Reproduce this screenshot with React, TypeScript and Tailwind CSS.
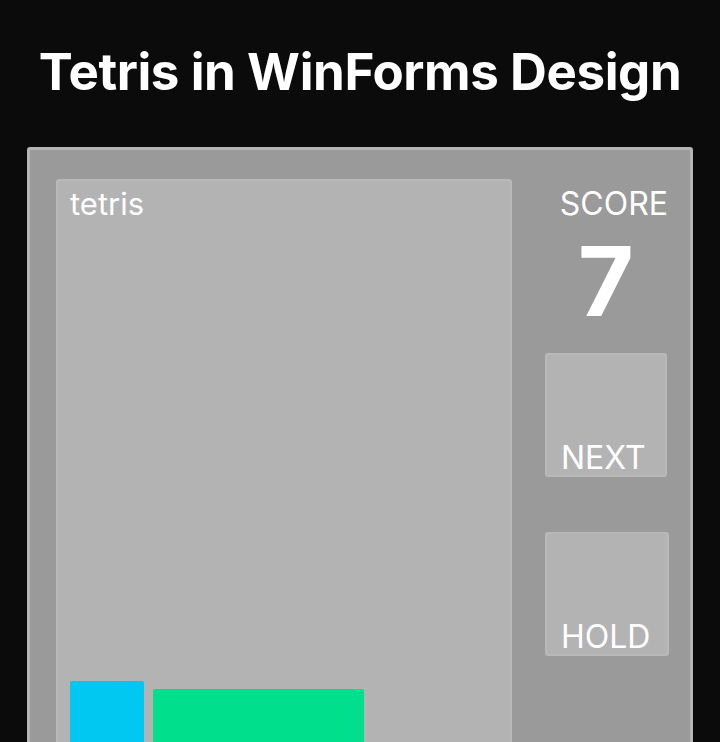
const font = { fontFamily: "Inter, 'Noto Sans', sans-serif" };

const PreviewBox = ({ label, className }: { label: string; className: string }) => (
  <div
    className={`flex h-[124px] items-end rounded-[3px] border-2 border-[#b9b9b9] bg-[#b3b3b3] pl-[14px] ${className}`}
  >
    <span className="text-[32px] leading-none text-white pb-[1px]">{label}</span>
  </div>
);

export default function App() {
  return (
    <div className="h-[742px] overflow-hidden bg-[#0b0b0b] text-white" style={font}>
      <h1 className="pt-[42px] text-center text-[51px] font-bold leading-[60px] tracking-[-0.4px]">
        Tetris in WinForms Design
      </h1>

      <div className="mx-[27px] mt-[45px] flex h-[640px] rounded-t-[3px] border-[3px] border-[#b5b5b5] bg-[#9a9a9a] pl-[26px] pt-[29px]">
        {/* board */}
        <div className="relative h-[620px] w-[456px] rounded-[3px] border-2 border-[#b9b9b9] bg-[#b3b3b3]">
          <span className="absolute left-[12px] top-[3px] text-[31px] leading-[40px]">tetris</span>
          <div className="absolute left-[12px] top-[500px] h-[100px] w-[74px] rounded-[2px] bg-[#00c8f0]" />
          <div className="absolute left-[95px] top-[508px] h-[100px] w-[211px] rounded-[2px] bg-[#00e08c]" />
        </div>

        {/* side panel */}
        <div className="flex flex-col pl-[33px]">
          <div className="flex w-[122px] justify-end">
            <span className="mr-[-1px] mt-[5px] text-[32px] leading-[40px]">SCORE</span>
          </div>
          <div className="flex w-[122px] justify-center">
            <span className="mt-[7px] text-[96px] font-bold leading-[100px]">7</span>
          </div>
          <PreviewBox label="NEXT" className="mt-[22px] w-[122px]" />
          <PreviewBox label="HOLD" className="mt-[55px] w-[124px]" />
        </div>
      </div>
    </div>
  );
}
